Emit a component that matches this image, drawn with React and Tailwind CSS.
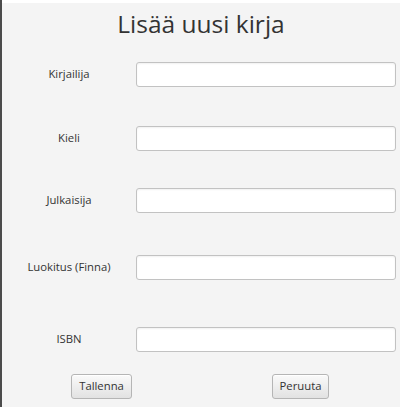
import React from 'react';

const fields = [
  { label: 'Kirjailija', mt: 'mt-0' },
  { label: 'Kieli', mt: 'mt-[39px]' },
  { label: 'Julkaisija', mt: 'mt-[37px]' },
  { label: 'Luokitus (Finna)', mt: 'mt-[42px]' },
  { label: 'ISBN', mt: 'mt-[47px]' },
];

const Button = ({ children }) => (
  <button
    type="button"
    className="h-[25px] px-[7px] rounded-[3px] border border-[#b5b5b5] bg-gradient-to-b from-[#fafafa] to-[#e2e2e2] text-[11.3px] text-[#333] shadow-[inset_0_1px_0_#ffffff]"
  >
    {children}
  </button>
);

const App = () => {
  return (
    <div
      className="w-[400px] h-[407px] border-l-2 border-[#4b4b4b] bg-[#f4f4f4] overflow-hidden"
      style={{ fontFamily: '"Open Sans", "Noto Sans", sans-serif' }}
    >
      <div className="h-[3px] bg-white" />
      <h1 className="h-[59px] pt-[4px] text-center text-[24.5px] leading-[33px] text-[#333]">
        Lisää uusi kirja
      </h1>

      <div className="flex flex-col">
        {fields.map((f) => (
          <div key={f.label} className={`${f.mt} grid grid-cols-[134px_260px] items-center`}>
            <label className="text-center text-[11.3px] text-[#333]">{f.label}</label>
            <input
              type="text"
              className="h-[25px] w-[260px] rounded-[3px] border border-[#c2c2c2] bg-white shadow-[inset_0_1px_2px_rgba(0,0,0,0.06)] focus:outline-none"
            />
          </div>
        ))}
      </div>

      <div className="mt-[22px] grid grid-cols-2 justify-items-center">
        <Button>Tallenna</Button>
        <Button>Peruuta</Button>
      </div>
    </div>
  );
};

export default App;
